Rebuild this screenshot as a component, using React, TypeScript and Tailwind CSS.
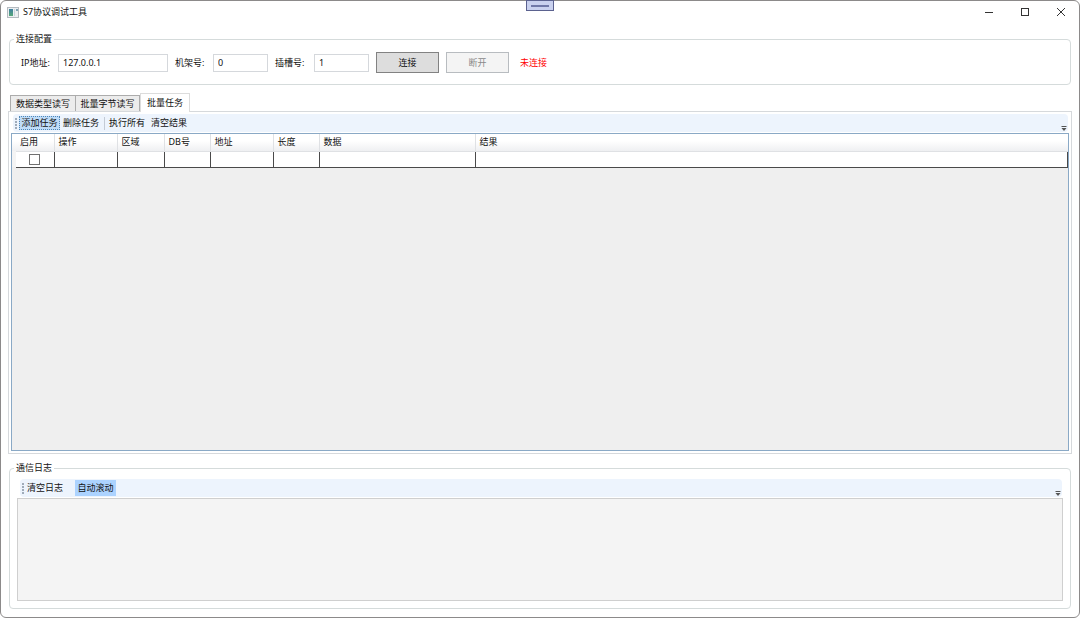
import type { ReactNode } from 'react'

const columns = [
  { name: '启用', width: 'w-[38px]' },
  { name: '操作', width: 'w-[63px]' },
  { name: '区域', width: 'w-[47px]' },
  { name: 'DB号', width: 'w-[46px]' },
  { name: '地址', width: 'w-[63px]' },
  { name: '长度', width: 'w-[46px]' },
  { name: '数据', width: 'w-[156px]' },
  { name: '结果', width: '' },
]

const tabs = [
  { name: '数据类型读写', width: 'w-[66px]' },
  { name: '批量字节读写', width: 'w-[64px]' },
  { name: '批量任务', width: 'w-[50px]' },
]

function TitleBar() {
  return (
    <header className="flex h-[22px] items-center pl-[6px] pr-[13px]">
      <svg width="12" height="11" viewBox="0 0 12 11" aria-hidden="true">
        <defs>
          <linearGradient id="app" x1="0" y1="0" x2="0" y2="1">
            <stop offset="0" stopColor="#3f7fa0" />
            <stop offset="1" stopColor="#57a878" />
          </linearGradient>
        </defs>
        <rect x="0.5" y="0.5" width="11" height="10" fill="#eceff1" stroke="#b4babf" />
        <rect x="2" y="2" width="4" height="7" fill="url(#app)" />
        <rect x="7" y="2" width="1" height="7" fill="#c9d3dc" />
        <rect x="9" y="2" width="2" height="2" fill="#7fa3b4" />
      </svg>
      <h1 className="ml-1 text-[9px]">S7协议调试工具</h1>
      <div className="ml-auto flex items-center gap-[26px]">
        <button aria-label="最小化">
          <svg width="10" height="10" viewBox="0 0 10 10" className="block">
            <path d="M1 5.5H9" stroke="#333" fill="none" />
          </svg>
        </button>
        <button aria-label="最大化">
          <svg width="10" height="10" viewBox="0 0 10 10" className="block">
            <rect x="1.5" y="1.5" width="7" height="7" stroke="#333" fill="none" />
          </svg>
        </button>
        <button aria-label="关闭">
          <svg width="10" height="10" viewBox="0 0 10 10" className="block">
            <path d="M1 1L9 9M9 1L1 9" stroke="#333" fill="none" />
          </svg>
        </button>
      </div>
    </header>
  )
}

function ToolBar({ children }: { children: ReactNode }) {
  return (
    <div role="toolbar" className="mb-px flex h-[18px] items-center rounded-sm bg-[#edf4fd] pl-[2px] pr-px">
      <svg width="2" height="11" viewBox="0 0 2 11" className="mr-[2px]" aria-hidden="true">
        <path d="M1 0V11" stroke="#6b7a8c" strokeWidth="2" strokeOpacity="0.6" strokeDasharray="2 1" />
      </svg>
      {children}
      <button aria-label="更多" className="ml-auto self-end pb-px">
        <svg width="6" height="5" viewBox="0 0 6 5" className="block">
          <path d="M0.5 0.5H5.5" stroke="#555" />
          <path d="M0.5 2H5.5L3 5Z" fill="#555" />
        </svg>
      </button>
    </div>
  )
}

type FieldProps = { id: string; label: string; value: string; labelWidth: string; width: string }

function Field({ id, label, value, labelWidth, width }: FieldProps) {
  return (
    <div className="mr-[7px] flex items-center">
      <label htmlFor={id} className={`whitespace-nowrap ${labelWidth}`}>{label}</label>
      <input
        id={id}
        defaultValue={value}
        className={`h-[18px] border border-[#d5d8dc] bg-white px-1 leading-4 outline-none ${width}`}
      />
    </div>
  )
}

function ConnectionGroup() {
  return (
    <fieldset className="rounded-sm border border-[#d5dbdb] px-1 pb-[11px] pt-[7px]">
      <legend className="px-0.5 leading-[12px]">连接配置</legend>
      <div className="flex h-[21px] items-center pl-[7px]">
        <Field id="ip" label="IP地址:" value="127.0.0.1" labelWidth="w-[37px]" width="w-[110px]" />
        <Field id="rack" label="机架号:" value="0" labelWidth="w-[38px]" width="w-[55px]" />
        <Field id="slot" label="插槽号:" value="1" labelWidth="w-[39px]" width="w-[55px]" />
        <button className="h-[21px] w-[63px] border border-[#828282] bg-[#dddddd]">连接</button>
        <button disabled className="ml-[7px] h-[21px] w-[63px] border border-[#b8bcc0] bg-[#f4f4f4] text-[#8a8a8a]">
          断开
        </button>
        <span className="ml-[11px] text-[#ff0000]">未连接</span>
      </div>
    </fieldset>
  )
}

function TaskGrid() {
  return (
    <div className="flex-1 border border-[#8aa9c6] bg-[#efefef]">
      <table className="w-full table-fixed border-collapse">
        <thead>
          <tr className="h-[17px] bg-gradient-to-b from-white from-40% to-[#eff0f2]">
            <th className="w-1 p-0" aria-label="行" />
            {columns.map((col) => (
              <th
                key={col.name}
                className={`border-b border-r border-[#dfe1e4] p-0 pl-[4px] text-left font-normal leading-[14px] last:border-r-0 ${col.width}`}
              >
                {col.name}
              </th>
            ))}
          </tr>
        </thead>
        <tbody>
          <tr className="h-[16px] bg-white">
            <td className="bg-[#f4f4f4] p-0" />
            {columns.map((col, i) => (
              <td key={col.name} className="border-b border-r border-[#4a4a4a] p-0">
                {i === 0 && (
                  <input
                    type="checkbox"
                    aria-label="启用"
                    className="mx-auto block size-[11px] appearance-none border border-[#707070] bg-white"
                  />
                )}
              </td>
            ))}
          </tr>
        </tbody>
      </table>
    </div>
  )
}

function TaskTabs() {
  return (
    <section className="-mx-px mt-2 flex flex-1 flex-col">
      <div role="tablist" className="flex h-[18px] items-end pl-[2px]">
        {tabs.map((tab, i) =>
          i === 2 ? (
            <button
              key={tab.name}
              role="tab"
              aria-selected="true"
              className={`relative -mb-px h-[19px] border border-b-0 border-[#dcdcdc] bg-white ${tab.width}`}
            >
              {tab.name}
            </button>
          ) : (
            <button
              key={tab.name}
              role="tab"
              aria-selected="false"
              className={`h-[16px] whitespace-nowrap border border-b-0 border-[#acacac] bg-[#ececec] leading-[14px] not-first:border-l-0 ${tab.width}`}
            >
              {tab.name}
            </button>
          ),
        )}
      </div>
      <div className="flex flex-1 flex-col border border-[#d6d9dc] p-[2px]">
        <div className="pl-[2px] pr-px">
          <ToolBar>
            <button className="h-[14px] w-[41px] border border-dotted border-[#4f87b8] bg-[#bfdcf8] leading-[12px]">添加任务</button>
            <button className="ml-[3px] leading-[14px]">删除任务</button>
            <span className="ml-[5px] mr-1 h-[13px] w-px bg-[#c3cbd6]" />
            <button className="leading-[14px]">执行所有</button>
            <button className="ml-[6px] leading-[14px]">清空结果</button>
          </ToolBar>
        </div>
        <TaskGrid />
      </div>
    </section>
  )
}

function LogGroup() {
  return (
    <fieldset className="mt-2 rounded-sm border border-[#d5dbdb] px-[7px] pb-[7px] pt-[5px]">
      <legend className="-ml-[3px] px-0.5 leading-[12px]">通信日志</legend>
      <div className="pl-[3px] pr-px">
        <ToolBar>
          <button className="ml-px leading-[14px]">清空日志</button>
          <button aria-pressed="true" className="ml-3 h-[16px] w-[41px] bg-[#acd3ff] leading-[14px]">
            自动滚动
          </button>
        </ToolBar>
      </div>
      <textarea
        readOnly
        aria-label="通信日志"
        className="block h-[103px] w-full resize-none border border-[#cfcfcf] bg-[#f4f4f4] p-1 outline-none"
      />
    </fieldset>
  )
}

export default function App() {
  return (
    <div className="relative flex min-h-screen flex-col rounded-md border border-[#8c8a8a] bg-white font-['Noto_Sans','Noto_Sans_CJK_SC',sans-serif] text-[9px] text-[#111]">
      <div className="absolute left-1/2 top-0 -ml-[14px] -mt-px flex h-[11px] w-7 items-center justify-center border border-[#5b628f] bg-[#c9d1ef]">
        <span className="h-[2px] w-[18px] bg-[#7078a8]" />
      </div>
      <TitleBar />
      <main className="flex flex-1 flex-col px-2 pb-2 pt-[10px]">
        <ConnectionGroup />
        <TaskTabs />
        <LogGroup />
      </main>
    </div>
  )
}
